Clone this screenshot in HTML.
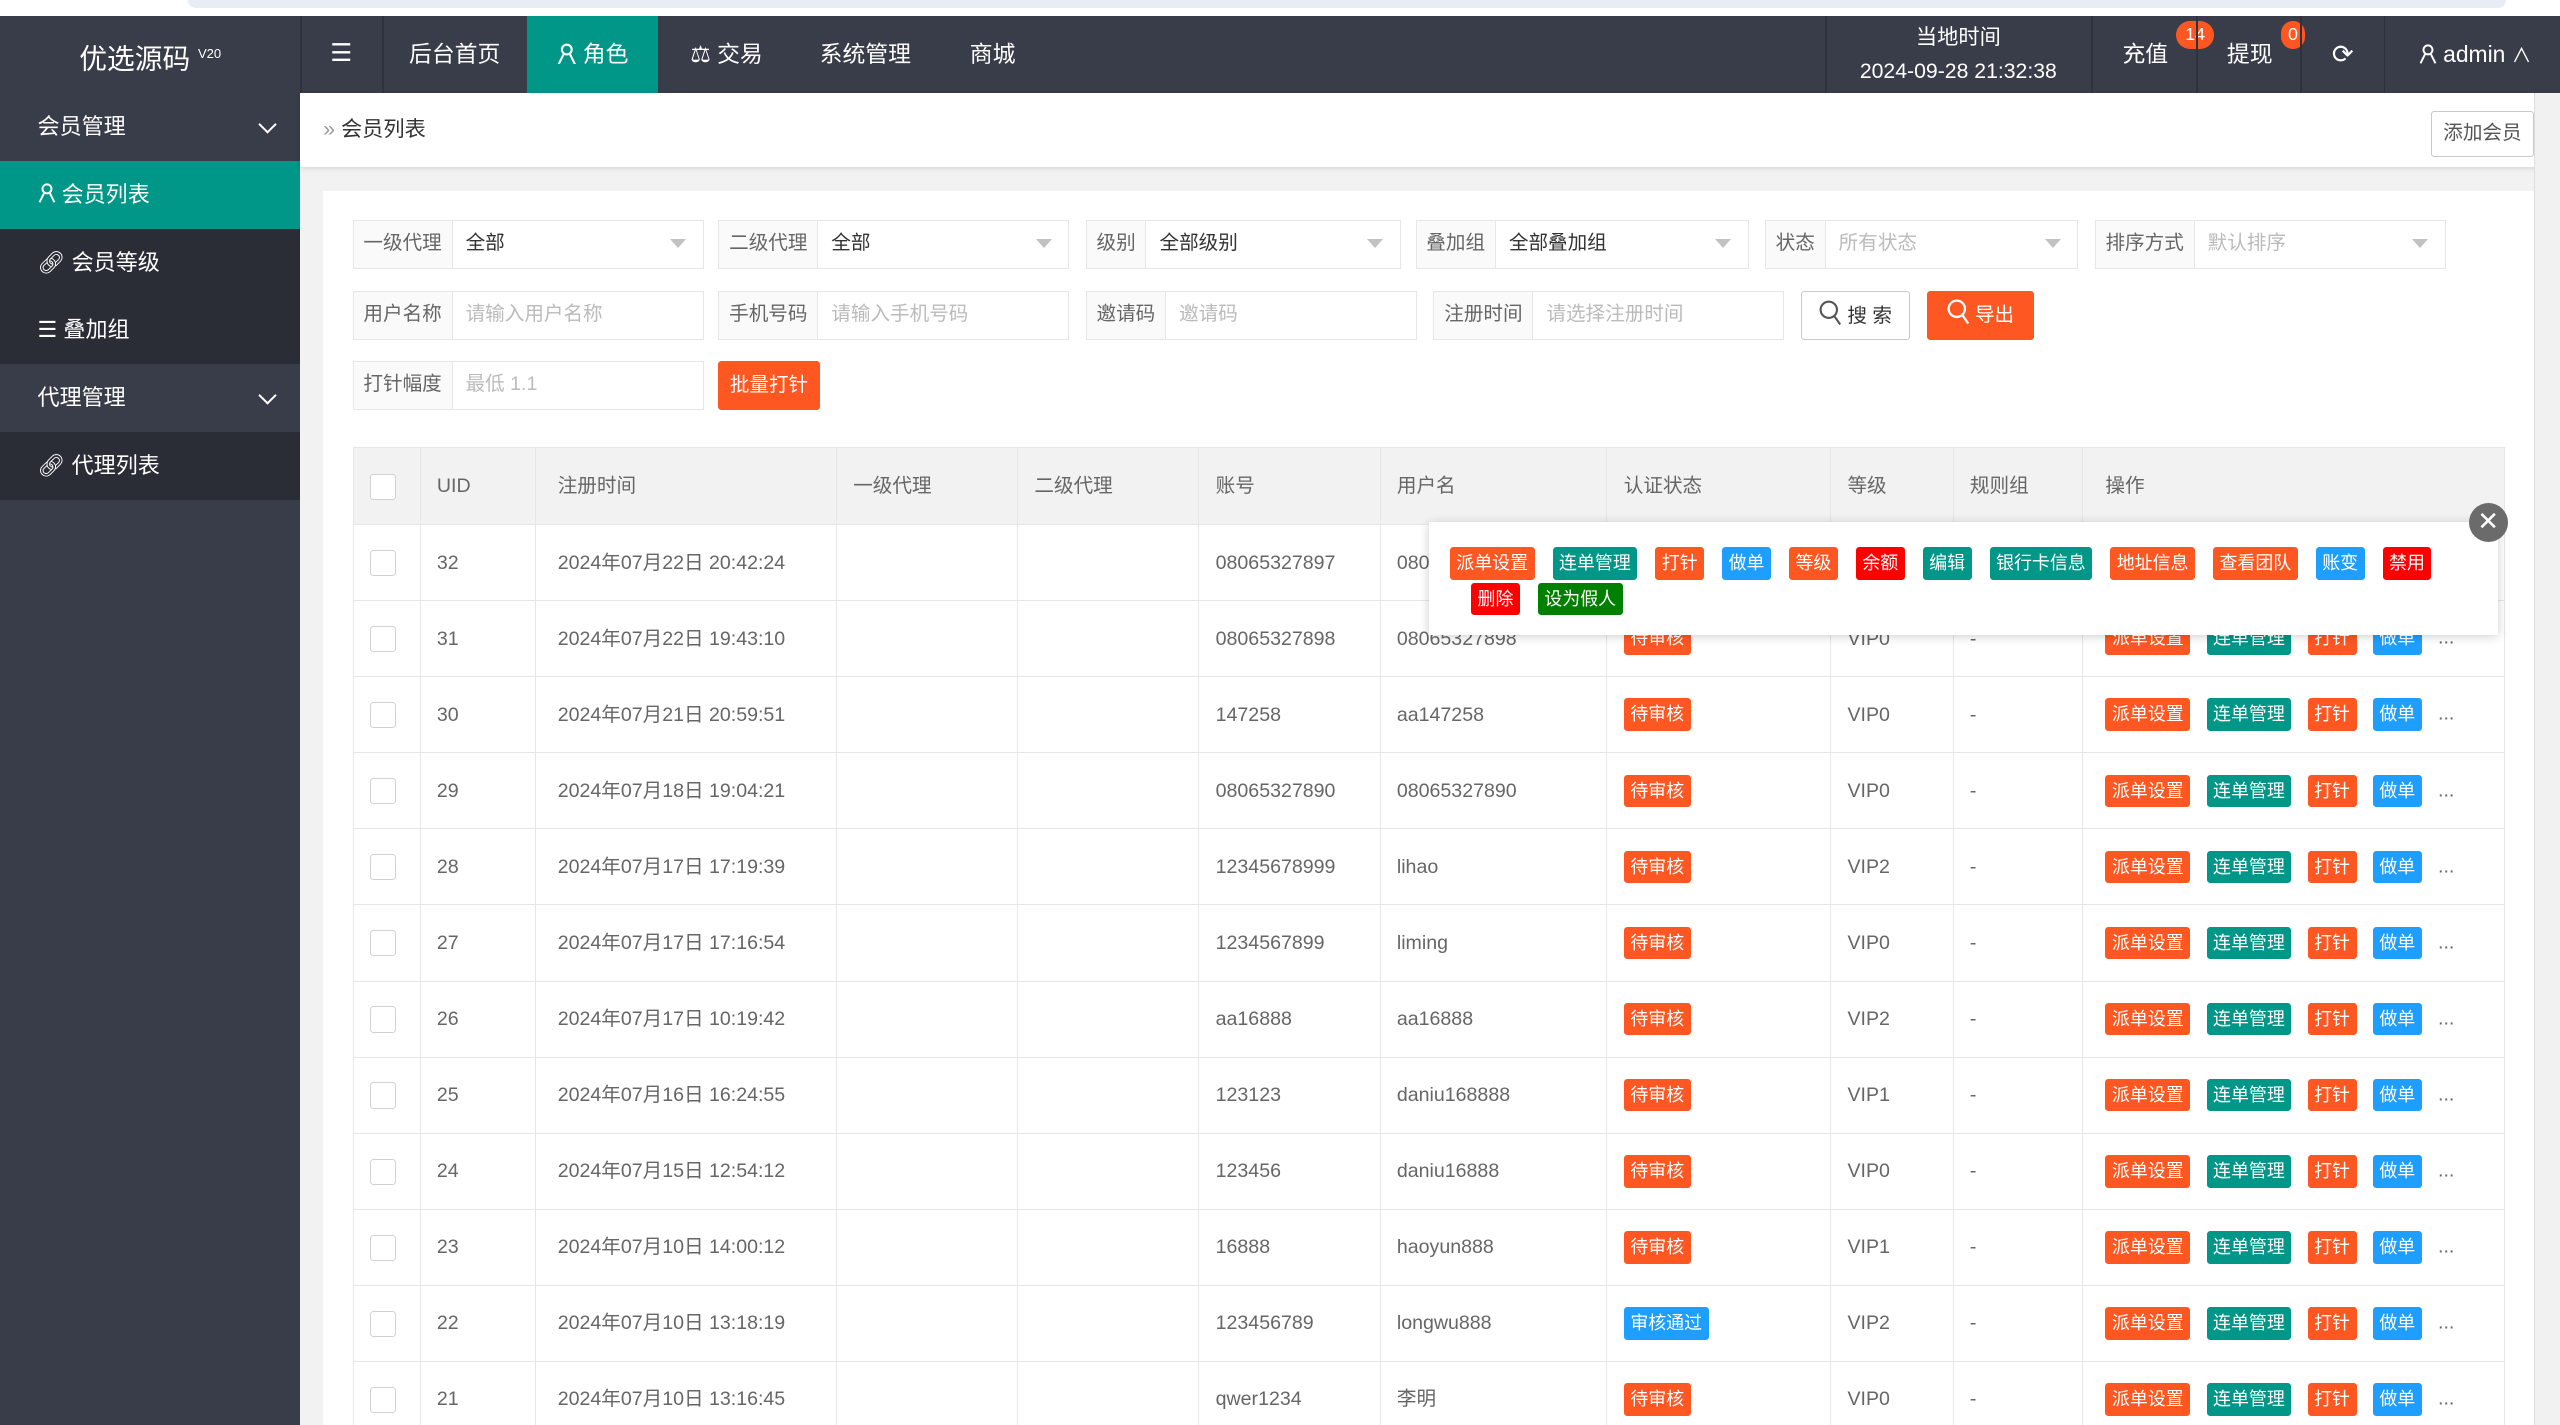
<!DOCTYPE html>
<html><head><meta charset="utf-8">
<style>
*{box-sizing:border-box;margin:0;padding:0}
html,body{width:2560px;height:1425px;overflow:hidden;background:#fff}
#z{zoom:1.63265;width:1568px;height:873px;position:relative;overflow:hidden;font-family:"Liberation Sans","Noto Sans CJK SC",sans-serif;color:#666;font-size:12px;background:#f2f2f2}
.abs{position:absolute}
.top{left:0;top:0;width:1568px;height:10px;background:#fff}
.top .band{position:absolute;left:115px;top:0;width:1420px;height:5px;background:#e8ecf4;border-radius:0 0 8px 8px}
.hdr{left:0;top:10px;width:1568px;height:47px;background:#393d49;color:#fff}
.hdr .it{position:absolute;top:0;height:47px;line-height:47px;font-size:14px;text-align:center;color:#fff}
.sep{position:absolute;top:0;width:1px;height:47px;background:#2f323b}
.side{left:0;top:57px;width:184px;height:816px;background:#393d49}
.side .it{position:absolute;left:0;width:184px;height:41.5px;line-height:41.5px;color:#fff;font-size:13.5px;padding-left:23px}
.dk{background:#2a2d36}
.gr{background:#009688}
.chev{position:absolute;right:16px;top:15px;width:8px;height:8px;border-right:1.5px solid #fff;border-bottom:1.5px solid #fff;transform:rotate(45deg)}
.bc{left:184px;top:57px;width:1384px;height:45px;background:#fff;box-shadow:0 1px 3px rgba(0,0,0,.12)}
.card{left:198px;top:117px;width:1354px;height:760px;background:#fff}
.sb{left:1552px;top:57px;width:16px;height:816px;background:#f1f1f1;border-left:1px solid #ddd}
.f{position:absolute;height:30px;border:1px solid #e6e6e6;background:#fff;display:flex;font-size:12px}
.f .l{background:#fafafa;border-right:1px solid #e6e6e6;color:#666;padding:0 6px;line-height:28px;white-space:nowrap}
.f .v{padding-left:8px;line-height:28px;color:#333;flex:1;position:relative}
.f .ph{color:#bbb}
.f .tri{position:absolute;right:10px;top:11px;border:5px solid transparent;border-top:6px solid #c2c2c2}
.btn{position:absolute;height:30px;line-height:30px;text-align:center;font-size:12px}
table{position:absolute;left:216px;top:274px;width:1318px;border-collapse:collapse;table-layout:fixed}
td,th{border:1px solid #e6e6e6;height:46.6px;font-weight:normal;text-align:left;padding-left:10px;color:#666;font-size:12px;white-space:nowrap;overflow:hidden;line-height:16px}
th{background:#f2f2f2;height:47px}
.cb{display:inline-block;width:16px;height:16px;border:1px solid #d2d2d2;border-radius:2px;background:#fff;vertical-align:middle}
.t{display:inline-block;height:20px;line-height:20px;padding:0 4px;color:#fff;font-size:11px;border-radius:2px;margin-right:10px;vertical-align:middle}
.o{background:#ff5722}.g{background:#009688}.b{background:#1e9fff}.r{background:#ff0000}.dg{background:#008000}
.pop{left:875px;top:320px;width:655px;height:69px;background:#fff;box-shadow:0 1px 6px rgba(0,0,0,.2);padding:15px 0 0 13px}
.pop .t{margin-right:11px;margin-bottom:2px}
.x{left:1512px;top:308px;width:24px;height:24px;border-radius:50%;background:#6b6b6b;color:#fff;text-align:center;line-height:23px;font-size:16px}
</style></head><body><div id="z">
<div class="abs top"><div class="band"></div></div>
<div class="abs hdr">
 <div class="it" style="left:0;width:184px;font-size:17px">优选源码 <sup style="font-size:8px">V20</sup></div>
 <div class="sep" style="left:184px"></div>
 <div class="it" style="left:184px;width:50px;font-size:15px">☰</div>
 <div class="sep" style="left:234px"></div>
 <div class="it" style="left:234px;width:89px">后台首页</div>
 <div class="it" style="left:323px;width:80px;background:#009688">
  <svg width="12" height="13" viewBox="0 0 12 13" style="vertical-align:-1px"><circle cx="6" cy="4" r="3" fill="none" stroke="#fff" stroke-width="1.3"/><path d="M1 13 L4 7 M11 13 L8 7" stroke="#fff" stroke-width="1.3"/></svg> 角色</div>
 <div class="it" style="left:403px;width:84px">⚖ 交易</div>
 <div class="it" style="left:487px;width:86px">系统管理</div>
 <div class="it" style="left:573px;width:70px">商城</div>
 <div class="sep" style="left:1118px"></div>
 <div class="abs" style="left:1118px;width:163px;top:3px;text-align:center;font-size:13px;line-height:21px">当地时间<br>2024-09-28 21:32:38</div>
 <div class="sep" style="left:1281px"></div>
 <div class="it" style="left:1292px;width:44px">充值</div>
 <div class="abs" style="left:1333px;top:3px;height:17px;width:23px;border-radius:9px;background:#ff5722;font-size:11px;line-height:17px;text-align:center">14</div>
 <div class="sep" style="left:1345px"></div>
 <div class="it" style="left:1356px;width:44px">提现</div>
 <div class="abs" style="left:1397px;top:3px;height:17px;width:15px;border-radius:9px;background:#ff5722;font-size:11px;line-height:17px;text-align:center">0</div>
 <div class="sep" style="left:1409px"></div>
 <div class="it" style="left:1420px;width:30px;font-size:16px">⟳</div>
 <div class="sep" style="left:1460px"></div>
 <div class="it" style="left:1470px;width:92px">
  <svg width="11" height="13" viewBox="0 0 12 13" style="vertical-align:-1px"><circle cx="6" cy="4" r="3" fill="none" stroke="#fff" stroke-width="1.3"/><path d="M1 13 L4 7 M11 13 L8 7" stroke="#fff" stroke-width="1.3"/></svg> admin <span style="font-size:12px">∧</span></div>
</div>
<div class="abs side">
 <div class="it" style="top:0">会员管理<span class="chev"></span></div>
 <div class="it gr" style="top:41.5px">
  <svg width="11" height="13" viewBox="0 0 12 13" style="vertical-align:-1px"><circle cx="6" cy="4" r="3" fill="none" stroke="#fff" stroke-width="1.3"/><path d="M1 13 L4 7 M11 13 L8 7" stroke="#fff" stroke-width="1.3"/></svg> 会员列表</div>
 <div class="it dk" style="top:83px">🔗︎ 会员等级</div>
 <div class="it dk" style="top:124.5px">☰ 叠加组</div>
 <div class="it" style="top:166px">代理管理<span class="chev"></span></div>
 <div class="it dk" style="top:207.5px">🔗︎ 代理列表</div>
</div>
<div class="abs bc">
 <div class="abs" style="left:14px;top:0;line-height:45px;font-size:13px;color:#333"><span style="color:#999">»</span> 会员列表</div>
 <div class="abs" style="left:1305px;top:11px;width:63px;height:28px;border:1px solid #c9c9c9;border-radius:2px;text-align:center;line-height:26px;color:#555">添加会员</div>
</div>
<div class="abs sb"></div>
<div class="abs card"></div>

<div class="f" style="left:216px;top:135px;width:215px"><span class="l">一级代理</span><span class="v">全部<i class="tri"></i></span></div>
<div class="f" style="left:440px;top:135px;width:215px"><span class="l">二级代理</span><span class="v">全部<i class="tri"></i></span></div>
<div class="f" style="left:665px;top:135px;width:193px"><span class="l">级别</span><span class="v">全部级别<i class="tri"></i></span></div>
<div class="f" style="left:867px;top:135px;width:204px"><span class="l">叠加组</span><span class="v">全部叠加组<i class="tri"></i></span></div>
<div class="f" style="left:1081px;top:135px;width:192px"><span class="l">状态</span><span class="v ph">所有状态<i class="tri"></i></span></div>
<div class="f" style="left:1283px;top:135px;width:215px"><span class="l">排序方式</span><span class="v ph">默认排序<i class="tri"></i></span></div>

<div class="f" style="left:216px;top:178px;width:215px"><span class="l">用户名称</span><span class="v ph">请输入用户名称</span></div>
<div class="f" style="left:440px;top:178px;width:215px"><span class="l">手机号码</span><span class="v ph">请输入手机号码</span></div>
<div class="f" style="left:665px;top:178px;width:203px"><span class="l">邀请码</span><span class="v ph">邀请码</span></div>
<div class="f" style="left:878px;top:178px;width:215px"><span class="l">注册时间</span><span class="v ph">请选择注册时间</span></div>
<div class="btn" style="left:1103px;top:178px;width:67px;border:1px solid #c9c9c9;color:#333;border-radius:2px;background:#fff">
 <svg width="14" height="16" viewBox="0 0 14 16" style="vertical-align:-3px"><circle cx="6" cy="6" r="5" fill="none" stroke="#555" stroke-width="1.3"/><path d="M9.5 10 L13 15" stroke="#555" stroke-width="1.3"/></svg> 搜 索</div>
<div class="btn" style="left:1180px;top:178px;width:66px;background:#ff5722;color:#fff;border-radius:2px">
 <svg width="14" height="16" viewBox="0 0 14 16" style="vertical-align:-3px"><circle cx="6" cy="6" r="5" fill="none" stroke="#fff" stroke-width="1.4"/><path d="M9.5 10 L13 15" stroke="#fff" stroke-width="1.4"/></svg> 导出</div>

<div class="f" style="left:216px;top:221px;width:215px"><span class="l">打针幅度</span><span class="v ph">最低 1.1</span></div>
<div class="btn" style="left:440px;top:221px;width:62px;background:#ff5722;color:#fff;border-radius:2px">批量打针</div>

<table>
<colgroup><col style="width:41px"><col style="width:71px"><col style="width:184px"><col style="width:111px"><col style="width:111px"><col style="width:111px"><col style="width:139px"><col style="width:137px"><col style="width:75px"><col style="width:79px"><col style="width:259px"></colgroup>
<tr><th><span class="cb"></span></th><th>UID</th><th style="padding-left:13px">注册时间</th><th>一级代理</th><th>二级代理</th><th>账号</th><th>用户名</th><th>认证状态</th><th>等级</th><th>规则组</th><th style="padding-left:14px">操作</th></tr>
<tr><td><span class="cb"></span></td><td>32</td><td style="padding-left:13px">2024年07月22日 20:42:24</td><td></td><td></td><td>08065327897</td><td>08065327897</td><td><span class="t o">待审核</span></td><td>VIP0</td><td>-</td><td style="padding-left:14px"><span class="t o">派单设置</span><span class="t g">连单管理</span><span class="t o">打针</span><span class="t b">做单</span>...</td></tr>
<tr><td><span class="cb"></span></td><td>31</td><td style="padding-left:13px">2024年07月22日 19:43:10</td><td></td><td></td><td>08065327898</td><td>08065327898</td><td><span class="t o">待审核</span></td><td>VIP0</td><td>-</td><td style="padding-left:14px"><span class="t o">派单设置</span><span class="t g">连单管理</span><span class="t o">打针</span><span class="t b">做单</span>...</td></tr>
<tr><td><span class="cb"></span></td><td>30</td><td style="padding-left:13px">2024年07月21日 20:59:51</td><td></td><td></td><td>147258</td><td>aa147258</td><td><span class="t o">待审核</span></td><td>VIP0</td><td>-</td><td style="padding-left:14px"><span class="t o">派单设置</span><span class="t g">连单管理</span><span class="t o">打针</span><span class="t b">做单</span>...</td></tr>
<tr><td><span class="cb"></span></td><td>29</td><td style="padding-left:13px">2024年07月18日 19:04:21</td><td></td><td></td><td>08065327890</td><td>08065327890</td><td><span class="t o">待审核</span></td><td>VIP0</td><td>-</td><td style="padding-left:14px"><span class="t o">派单设置</span><span class="t g">连单管理</span><span class="t o">打针</span><span class="t b">做单</span>...</td></tr>
<tr><td><span class="cb"></span></td><td>28</td><td style="padding-left:13px">2024年07月17日 17:19:39</td><td></td><td></td><td>12345678999</td><td>lihao</td><td><span class="t o">待审核</span></td><td>VIP2</td><td>-</td><td style="padding-left:14px"><span class="t o">派单设置</span><span class="t g">连单管理</span><span class="t o">打针</span><span class="t b">做单</span>...</td></tr>
<tr><td><span class="cb"></span></td><td>27</td><td style="padding-left:13px">2024年07月17日 17:16:54</td><td></td><td></td><td>1234567899</td><td>liming</td><td><span class="t o">待审核</span></td><td>VIP0</td><td>-</td><td style="padding-left:14px"><span class="t o">派单设置</span><span class="t g">连单管理</span><span class="t o">打针</span><span class="t b">做单</span>...</td></tr>
<tr><td><span class="cb"></span></td><td>26</td><td style="padding-left:13px">2024年07月17日 10:19:42</td><td></td><td></td><td>aa16888</td><td>aa16888</td><td><span class="t o">待审核</span></td><td>VIP2</td><td>-</td><td style="padding-left:14px"><span class="t o">派单设置</span><span class="t g">连单管理</span><span class="t o">打针</span><span class="t b">做单</span>...</td></tr>
<tr><td><span class="cb"></span></td><td>25</td><td style="padding-left:13px">2024年07月16日 16:24:55</td><td></td><td></td><td>123123</td><td>daniu168888</td><td><span class="t o">待审核</span></td><td>VIP1</td><td>-</td><td style="padding-left:14px"><span class="t o">派单设置</span><span class="t g">连单管理</span><span class="t o">打针</span><span class="t b">做单</span>...</td></tr>
<tr><td><span class="cb"></span></td><td>24</td><td style="padding-left:13px">2024年07月15日 12:54:12</td><td></td><td></td><td>123456</td><td>daniu16888</td><td><span class="t o">待审核</span></td><td>VIP0</td><td>-</td><td style="padding-left:14px"><span class="t o">派单设置</span><span class="t g">连单管理</span><span class="t o">打针</span><span class="t b">做单</span>...</td></tr>
<tr><td><span class="cb"></span></td><td>23</td><td style="padding-left:13px">2024年07月10日 14:00:12</td><td></td><td></td><td>16888</td><td>haoyun888</td><td><span class="t o">待审核</span></td><td>VIP1</td><td>-</td><td style="padding-left:14px"><span class="t o">派单设置</span><span class="t g">连单管理</span><span class="t o">打针</span><span class="t b">做单</span>...</td></tr>
<tr><td><span class="cb"></span></td><td>22</td><td style="padding-left:13px">2024年07月10日 13:18:19</td><td></td><td></td><td>123456789</td><td>longwu888</td><td><span class="t b">审核通过</span></td><td>VIP2</td><td>-</td><td style="padding-left:14px"><span class="t o">派单设置</span><span class="t g">连单管理</span><span class="t o">打针</span><span class="t b">做单</span>...</td></tr>
<tr><td><span class="cb"></span></td><td>21</td><td style="padding-left:13px">2024年07月10日 13:16:45</td><td></td><td></td><td>qwer1234</td><td>李明</td><td><span class="t o">待审核</span></td><td>VIP0</td><td>-</td><td style="padding-left:14px"><span class="t o">派单设置</span><span class="t g">连单管理</span><span class="t o">打针</span><span class="t b">做单</span>...</td></tr>
</table>

<div class="abs pop">
 <span class="t o">派单设置</span><span class="t g">连单管理</span><span class="t o">打针</span><span class="t b">做单</span><span class="t o">等级</span><span class="t r">余额</span><span class="t g">编辑</span><span class="t g">银行卡信息</span><span class="t o">地址信息</span><span class="t o">查看团队</span><span class="t b">账变</span><span class="t r">禁用</span><br>
 <span class="t r" style="margin-left:13px">删除</span><span class="t dg">设为假人</span>
</div>
<div class="abs x">✕</div>
</div></body></html>
